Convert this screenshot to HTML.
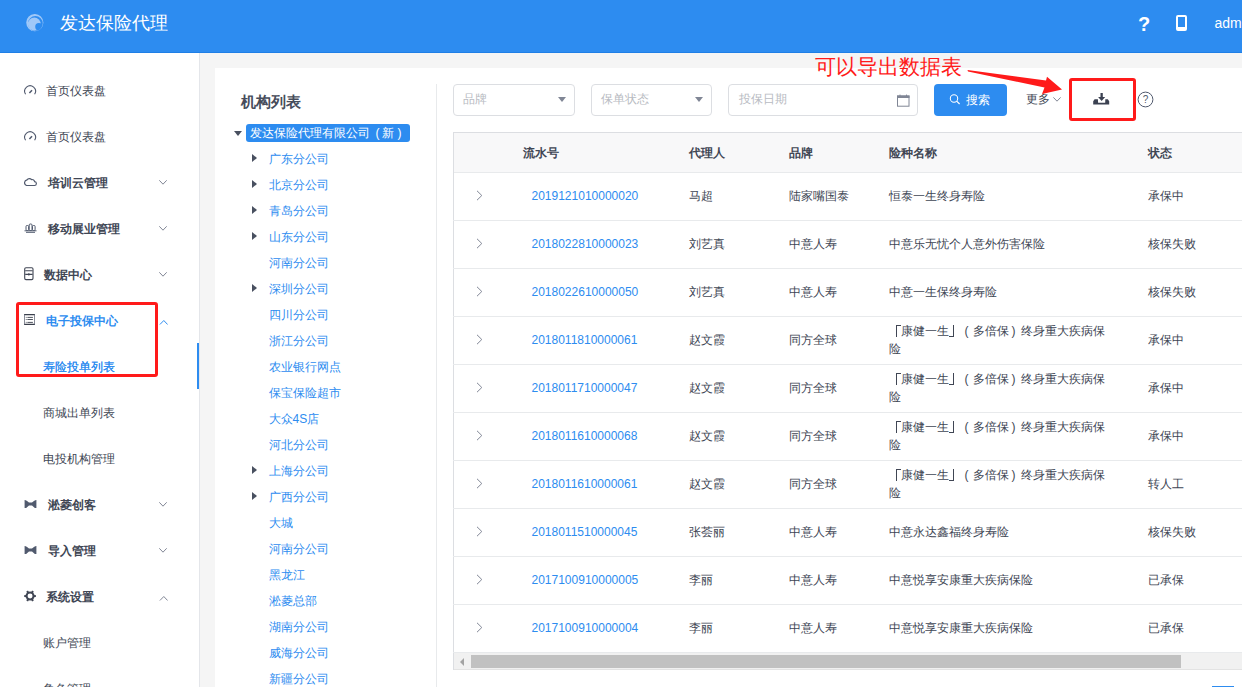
<!DOCTYPE html>
<html><head><meta charset="utf-8">
<style>
*{box-sizing:border-box;margin:0;padding:0}
html,body{width:1242px;height:687px;overflow:hidden;background:#f5f5f5;font-family:"Liberation Sans",sans-serif;color:#404654;font-size:12px}
.abs{position:absolute;white-space:nowrap}
#hdr{position:absolute;left:0;top:0;width:1242px;height:53px;background:#2d8cf0;border-bottom:1px solid #1f7fe6}
#side{position:absolute;left:0;top:53px;width:200px;height:634px;background:#fff;border-right:1px solid #e4e6ea}
.mi{position:absolute;left:0;width:199px;height:46px;line-height:46px;font-size:12px;color:#404654}
.mi .t{position:absolute;left:46px;top:1px}
.mi.b .t{font-weight:bold;left:48px}
.mi .ic{position:absolute;left:24px;top:17px}
.mi .chev{position:absolute;left:159px;top:20px}
.sub .t{left:43px}
#card{position:absolute;left:215px;top:68px;width:1100px;height:640px;background:#fff}
.tn{position:absolute;left:268.5px;height:26px;line-height:28px;color:#2d8cf0;font-size:12px}
.car{position:absolute;left:252px;width:0;height:0;border-top:4.5px solid transparent;border-bottom:4.5px solid transparent;border-left:5.5px solid #495060}
.th{position:absolute;top:133px;height:40px;line-height:40px;font-weight:bold;color:#404654}
.row{position:absolute;left:453px;width:800px;height:48px;border-bottom:1px solid #e8eaec}
.c{position:absolute;top:0;height:47px;line-height:47px;color:#404654}
.sel{position:absolute;top:84px;height:32px;border:1px solid #dcdee2;border-radius:4px;background:#fff}
.sel .ph{position:absolute;left:8.5px;top:0;line-height:29px;color:#b8bbc2;font-size:12px}
.dd{position:absolute;top:12px;width:0;height:0;border-left:4.5px solid transparent;border-right:4.5px solid transparent;border-top:5px solid #808695}
.sp{display:inline-block;width:12px}
</style></head><body>
<div id="hdr">
  <svg class="abs" style="left:26px;top:14px" width="18" height="18" viewBox="0 0 18 18"><circle cx="8.3" cy="10" r="6.4" fill="#9fc8f8"/><circle cx="12.9" cy="12.7" r="3.7" fill="#2d8cf0"/><path fill-rule="evenodd" fill="#9fc8f8" d="M0.2 8.6 A8.6 8.6 0 1 0 17.4 8.6 A8.6 8.6 0 1 0 0.2 8.6 Z M2 9.4 A7.4 7.4 0 1 0 16.8 9.4 A7.4 7.4 0 1 0 2 9.4 Z"/></svg>
  <div class="abs" style="left:60px;top:11px;font-size:18px;line-height:24px;color:#fff">发达保险代理</div>
  <div class="abs" style="left:1138px;top:12px;font-size:20px;line-height:24px;color:#fff;font-weight:bold">?</div>
  <svg class="abs" style="left:1176px;top:15px" width="12" height="16" viewBox="0 0 12 16"><rect x="1" y="1" width="9" height="14" rx="1" fill="none" stroke="#fff" stroke-width="2"/><rect x="1" y="12" width="9" height="3" fill="#fff"/></svg>
  <div class="abs" style="left:1214.5px;top:14px;font-size:14px;line-height:18px;color:#fff">admin</div>
</div>
<div id="side">
  <div class="mi" style="top:14px"><svg class="ic" style="top:18px" width="13" height="10" viewBox="0 0 13 10"><path d="M1.6 9.2 A5.4 5.4 0 1 1 10.6 9.2" fill="none" stroke="#515a6e" stroke-width="1.1"/><path d="M5.4 8 L8 5.2" stroke="#515a6e" stroke-width="1.5"/></svg><span class="t">首页仪表盘</span></div>
  <div class="mi" style="top:60px"><svg class="ic" style="top:18px" width="13" height="10" viewBox="0 0 13 10"><path d="M1.6 9.2 A5.4 5.4 0 1 1 10.6 9.2" fill="none" stroke="#515a6e" stroke-width="1.1"/><path d="M5.4 8 L8 5.2" stroke="#515a6e" stroke-width="1.5"/></svg><span class="t">首页仪表盘</span></div>
  <div class="mi b" style="top:106px"><svg class="ic" style="top:18px" width="13" height="10" viewBox="0 0 13 10"><path d="M2.5 8.5 H10.3 A1.9 1.9 0 0 0 10.6 4.7 A2.4 2.4 0 0 0 7.6 2.6 A2.8 2.8 0 0 0 3 2.9 A2.9 2.9 0 0 0 2.5 8.5 Z" fill="none" stroke="#515a6e" stroke-width="1.2"/></svg><span class="t">培训云管理</span><svg class="chev" style="top:21px" width="9" height="6" viewBox="0 0 9 6"><path d="M0.3 0.3 L4 4.2 L7.7 0.3" fill="none" stroke="#808695" stroke-width="1"/></svg></div>
  <div class="mi b" style="top:152px"><svg class="ic" style="top:18px" width="13" height="10" viewBox="0 0 13 10"><g fill="none" stroke="#515a6e" stroke-width="1"><rect x="2" y="2.5" width="2.6" height="5" rx="1"/><rect x="5.2" y="1" width="2.8" height="6.5" rx="1"/><rect x="8.5" y="2.5" width="2.6" height="5" rx="1"/></g><path d="M0.5 7.8 H12.5 M2 9.3 H11" stroke="#515a6e" stroke-width="1"/></svg><span class="t">移动展业管理</span><svg class="chev" style="top:21px" width="9" height="6" viewBox="0 0 9 6"><path d="M0.3 0.3 L4 4.2 L7.7 0.3" fill="none" stroke="#808695" stroke-width="1"/></svg></div>
  <div class="mi b" style="top:198px"><svg class="ic" style="top:16px" width="10" height="14" viewBox="0 0 10 14"><rect x="0.7" y="0.7" width="8.3" height="11.9" rx="1.3" fill="none" stroke="#404654" stroke-width="1.1"/><path d="M1.2 3.8 H8.6 M1.2 7.4 H8.6" stroke="#404654" stroke-width="1.1"/><path d="M4.85 6.2 V8.6" stroke="#404654" stroke-width="1.2"/></svg><span class="t" style="left:44px">数据中心</span><svg class="chev" style="top:21px" width="9" height="6" viewBox="0 0 9 6"><path d="M0.3 0.3 L4 4.2 L7.7 0.3" fill="none" stroke="#808695" stroke-width="1"/></svg></div>
  <div class="mi b" style="top:244px;color:#2d8cf0"><svg class="ic" style="top:17px" width="12" height="12" viewBox="0 0 12 12"><path d="M0 0.6 H11 M0 10.4 H11" stroke="#3a3f4c" stroke-width="1.1"/><path d="M0.5 0.6 V10.4 M10.5 0.6 V10.4" stroke="#7a7f8c" stroke-width="0.9"/><path d="M1.8 3.4 H2.6 M3.4 3.4 H8.9 M1.8 5.5 H2.6 M3.4 5.5 H8.9 M1.8 8.4 H2.6 M3.4 8.4 H8.9" stroke="#3a3f4c" stroke-width="0.9"/></svg><span class="t" style="left:46px">电子投保中心</span><svg class="chev" style="top:23px" width="9" height="6" viewBox="0 0 9 6"><path d="M0.9 4.5 L4.8 0.5 L8.6 4.5" fill="none" stroke="#2d8cf0" stroke-width="1"/></svg></div>
  <div class="mi sub" style="top:290px;color:#2d8cf0"><span class="t" style="left:43px;text-shadow:0.4px 0 0 #2d8cf0">寿险投单列表</span><div style="position:absolute;left:197px;top:0;width:2px;height:46px;background:#2d8cf0"></div></div>
  <div class="mi sub" style="top:336px"><span class="t">商城出单列表</span></div>
  <div class="mi sub" style="top:382px"><span class="t">电投机构管理</span></div>
  <div class="mi b" style="top:428px"><svg class="ic" style="top:18px" width="13" height="10" viewBox="0 0 13 10"><path d="M0.6 1 Q2 0.5 5 3.6 V6.4 Q2 9.5 0.6 9 Z M12.4 1 Q11 0.5 8 3.6 V6.4 Q11 9.5 12.4 9 Z M5 3.5 H8 V6.5 H5 Z" fill="#515a6e"/></svg><span class="t">淞菱创客</span><svg class="chev" style="top:21px" width="9" height="6" viewBox="0 0 9 6"><path d="M0.3 0.3 L4 4.2 L7.7 0.3" fill="none" stroke="#808695" stroke-width="1"/></svg></div>
  <div class="mi b" style="top:474px"><svg class="ic" style="top:18px" width="13" height="10" viewBox="0 0 13 10"><path d="M0.6 1 Q2 0.5 5 3.6 V6.4 Q2 9.5 0.6 9 Z M12.4 1 Q11 0.5 8 3.6 V6.4 Q11 9.5 12.4 9 Z M5 3.5 H8 V6.5 H5 Z" fill="#515a6e"/></svg><span class="t">导入管理</span><svg class="chev" style="top:21px" width="9" height="6" viewBox="0 0 9 6"><path d="M0.3 0.3 L4 4.2 L7.7 0.3" fill="none" stroke="#808695" stroke-width="1"/></svg></div>
  <div class="mi b" style="top:520px"><svg class="ic" style="top:17px" width="12" height="12" viewBox="-0.1 -0.1 11.1 11.1"><g fill="#404654"><rect x="4.6" y="0.1" width="1.8" height="3" transform="rotate(30 5.5 5.5)"/><rect x="4.6" y="0.1" width="1.8" height="3" transform="rotate(90 5.5 5.5)"/><rect x="4.6" y="0.1" width="1.8" height="3" transform="rotate(150 5.5 5.5)"/><rect x="4.6" y="0.1" width="1.8" height="3" transform="rotate(210 5.5 5.5)"/><rect x="4.6" y="0.1" width="1.8" height="3" transform="rotate(270 5.5 5.5)"/><rect x="4.6" y="0.1" width="1.8" height="3" transform="rotate(330 5.5 5.5)"/><circle cx="5.5" cy="5.5" r="4.2"/></g><circle cx="5.5" cy="5.5" r="2.3" fill="#fff"/></svg><span class="t" style="left:46px">系统设置</span><svg class="chev" style="top:23px" width="9" height="6" viewBox="0 0 9 6"><path d="M0.9 4.5 L4.8 0.5 L8.6 4.5" fill="none" stroke="#808695" stroke-width="1"/></svg></div>
  <div class="mi sub" style="top:566px"><span class="t">账户管理</span></div>
  <div class="mi sub" style="top:612px"><span class="t">角色管理</span></div>
</div>
<div id="card"></div>
<div class="abs" style="left:16px;top:302px;width:142px;height:75px;border:3px solid #ff1a1a;border-radius:3px"></div>
<div class="abs" style="left:241px;top:92px;font-size:15px;line-height:20px;font-weight:bold;color:#464c5b">机构列表</div>
<div class="abs" style="left:436px;top:84px;width:1px;height:610px;background:#e8eaec"></div>
<div class="abs" style="left:234px;top:131px;width:0;height:0;border-left:4.5px solid transparent;border-right:4.5px solid transparent;border-top:5px solid #495060"></div>
<div class="abs" style="left:246px;top:124px;width:164px;height:18px;background:#2d8cf0;border-radius:3px"></div>
<div class="abs" style="left:250px;top:124px;height:18px;line-height:18px;color:#fff;font-size:12px">发达保险代理有限公司</div><div class="abs" style="left:375.5px;top:124px;line-height:18px;color:#fff;font-size:12px">(</div><div class="abs" style="left:382px;top:124px;line-height:18px;color:#fff;font-size:12px">新</div><div class="abs" style="left:397.5px;top:124px;line-height:18px;color:#fff;font-size:12px">)</div>
<div class="tn" style="top:145px">广东分公司</div>
<div class="car" style="top:154px"></div>
<div class="tn" style="top:171px">北京分公司</div>
<div class="car" style="top:180px"></div>
<div class="tn" style="top:197px">青岛分公司</div>
<div class="car" style="top:206px"></div>
<div class="tn" style="top:223px">山东分公司</div>
<div class="car" style="top:232px"></div>
<div class="tn" style="top:249px">河南分公司</div>
<div class="tn" style="top:275px">深圳分公司</div>
<div class="car" style="top:284px"></div>
<div class="tn" style="top:301px">四川分公司</div>
<div class="tn" style="top:327px">浙江分公司</div>
<div class="tn" style="top:353px">农业银行网点</div>
<div class="tn" style="top:379px">保宝保险超市</div>
<div class="tn" style="top:405px">大众4S店</div>
<div class="tn" style="top:431px">河北分公司</div>
<div class="tn" style="top:457px">上海分公司</div>
<div class="car" style="top:466px"></div>
<div class="tn" style="top:483px">广西分公司</div>
<div class="car" style="top:492px"></div>
<div class="tn" style="top:509px">大城</div>
<div class="tn" style="top:535px">河南分公司</div>
<div class="tn" style="top:561px">黑龙江</div>
<div class="tn" style="top:587px">淞菱总部</div>
<div class="tn" style="top:613px">湖南分公司</div>
<div class="tn" style="top:639px">威海分公司</div>
<div class="tn" style="top:665px">新疆分公司</div>
<div class="sel" style="left:453px;width:122px"><span class="ph">品牌</span><i class="dd" style="left:104px"></i></div>
<div class="sel" style="left:591px;width:121px"><span class="ph">保单状态</span><i class="dd" style="left:103px"></i></div>
<div class="sel" style="left:728px;width:190px"><span class="ph" style="left:10px">投保日期</span>
<svg class="abs" style="left:167px;top:9px" width="14" height="13" viewBox="0 0 14 13"><rect x="1.5" y="2" width="11.5" height="10.2" fill="none" stroke="#808695" stroke-width="1"/><rect x="1" y="1.5" width="12.5" height="2.5" fill="#808695"/><path d="M4 0.6 V2 M10.5 0.6 V2" stroke="#808695" stroke-width="1"/></svg></div>
<div class="abs" style="left:934px;top:84px;width:73px;height:32px;background:#2d8cf0;border-radius:4px"></div>
<svg class="abs" style="left:949px;top:94px" width="12" height="12" viewBox="0 0 12 12"><circle cx="5" cy="4.5" r="3.7" fill="none" stroke="#fff" stroke-width="1.05"/><path d="M7.6 7.1 L10.6 10" stroke="#fff" stroke-width="1.2"/></svg>
<div class="abs" style="left:966px;top:84px;height:32px;line-height:32px;color:#fff;font-size:12px">搜索</div>
<div class="abs" style="left:1026px;top:83px;height:32px;line-height:32px;color:#404654;font-size:12px">更多</div>
<svg class="abs" style="left:1053px;top:97px" width="9" height="6" viewBox="0 0 9 6"><path d="M0.4 0.4 L4 4.2 L7.6 0.4" fill="none" stroke="#808695" stroke-width="1"/></svg>
<svg class="abs" style="left:1093px;top:92px" width="17" height="14" viewBox="0 0 17 14"><path d="M7.5 1 H9.8 V5 H12.2 L8.65 9 L5.1 5 H7.5 Z" fill="#3b4151"/><path d="M0.2 9.3 L1.6 7.2 H4.9 L5.1 10.8 H12.2 L12.3 7.2 H14.8 L16.2 9.3 V12.6 H0.2 Z" fill="#3b4151"/></svg>
<svg class="abs" style="left:1137px;top:91px" width="17" height="17" viewBox="0 0 17 17"><circle cx="8.5" cy="8.5" r="7.4" fill="none" stroke="#515a6e" stroke-width="1"/><text x="8.5" y="12.3" text-anchor="middle" font-family="Liberation Sans" font-size="10" fill="#515a6e">?</text></svg>
<div class="abs" style="left:1069px;top:78px;width:67px;height:43px;border:3px solid #ff1a1a;border-radius:3px"></div>
<div class="abs" style="left:815px;top:53px;font-size:21px;line-height:28px;color:#ff1a1a">可以导出数据表</div>
<svg class="abs" style="left:960px;top:60px" width="120" height="40" viewBox="960 60 120 40"><path d="M967.5 70 L1046 80.5 L1047 76.8 L1062 89.5 L1042 94 L1044.5 87.5 L968 71.5 Z" fill="#ff1a1a"/></svg>
<div class="abs" style="left:453px;top:132px;width:900px;height:538px;border:1px solid #dcdee2;border-right:none"></div>
<div class="abs" style="left:454px;top:133px;width:900px;height:40px;background:#f8f8f9;border-bottom:1px solid #e8eaec"></div>
<div class="th" style="left:523px">流水号</div>
<div class="th" style="left:689px">代理人</div>
<div class="th" style="left:789px">品牌</div>
<div class="th" style="left:889px">险种名称</div>
<div class="th" style="left:1148px">状态</div>
<div class="row" style="top:173px">
<svg class="abs" style="left:23px;top:17px" width="7" height="11" viewBox="0 0 7 11"><path d="M1 0.8 L5.8 5.5 L1 10.2" fill="none" stroke="#808695" stroke-width="1"/></svg>
<div class="c" style="left:78.5px;color:#2d8cf0">2019121010000020</div>
<div class="c" style="left:236px">马超</div>
<div class="c" style="left:336px">陆家嘴国泰</div>
<div class="c" style="left:436px">恒泰一生终身寿险</div>
<div class="c" style="left:695px">承保中</div>
</div>
<div class="row" style="top:221px">
<svg class="abs" style="left:23px;top:17px" width="7" height="11" viewBox="0 0 7 11"><path d="M1 0.8 L5.8 5.5 L1 10.2" fill="none" stroke="#808695" stroke-width="1"/></svg>
<div class="c" style="left:78.5px;color:#2d8cf0">2018022810000023</div>
<div class="c" style="left:236px">刘艺真</div>
<div class="c" style="left:336px">中意人寿</div>
<div class="c" style="left:436px">中意乐无忧个人意外伤害保险</div>
<div class="c" style="left:695px">核保失败</div>
</div>
<div class="row" style="top:269px">
<svg class="abs" style="left:23px;top:17px" width="7" height="11" viewBox="0 0 7 11"><path d="M1 0.8 L5.8 5.5 L1 10.2" fill="none" stroke="#808695" stroke-width="1"/></svg>
<div class="c" style="left:78.5px;color:#2d8cf0">2018022610000050</div>
<div class="c" style="left:236px">刘艺真</div>
<div class="c" style="left:336px">中意人寿</div>
<div class="c" style="left:436px">中意一生保终身寿险</div>
<div class="c" style="left:695px">核保失败</div>
</div>
<div class="row" style="top:317px">
<svg class="abs" style="left:23px;top:17px" width="7" height="11" viewBox="0 0 7 11"><path d="M1 0.8 L5.8 5.5 L1 10.2" fill="none" stroke="#808695" stroke-width="1"/></svg>
<div class="c" style="left:78.5px;color:#2d8cf0">2018011810000061</div>
<div class="c" style="left:236px">赵文霞</div>
<div class="c" style="left:336px">同方全球</div>
<div class="c" style="left:436px;top:5px;height:18px;line-height:18px"><span class="sp"></span>康健一生<span class="sp"></span><span class="sp"></span>多倍保<span class="sp"></span>终身重大疾病保</div><div class="c" style="left:436px;top:23px;height:18px;line-height:18px">险</div><div class="abs" style="left:442.5px;top:8px;width:5px;height:12px;border-left:1px solid #404654;border-top:1px solid #404654"></div><div class="abs" style="left:495.5px;top:8px;width:5px;height:12px;border-right:1px solid #404654;border-bottom:1px solid #404654"></div><div class="c" style="left:511.5px;top:5px;height:18px;line-height:18px">(</div><div class="c" style="left:558.5px;top:5px;height:18px;line-height:18px">)</div>
<div class="c" style="left:695px">承保中</div>
</div>
<div class="row" style="top:365px">
<svg class="abs" style="left:23px;top:17px" width="7" height="11" viewBox="0 0 7 11"><path d="M1 0.8 L5.8 5.5 L1 10.2" fill="none" stroke="#808695" stroke-width="1"/></svg>
<div class="c" style="left:78.5px;color:#2d8cf0">2018011710000047</div>
<div class="c" style="left:236px">赵文霞</div>
<div class="c" style="left:336px">同方全球</div>
<div class="c" style="left:436px;top:5px;height:18px;line-height:18px"><span class="sp"></span>康健一生<span class="sp"></span><span class="sp"></span>多倍保<span class="sp"></span>终身重大疾病保</div><div class="c" style="left:436px;top:23px;height:18px;line-height:18px">险</div><div class="abs" style="left:442.5px;top:8px;width:5px;height:12px;border-left:1px solid #404654;border-top:1px solid #404654"></div><div class="abs" style="left:495.5px;top:8px;width:5px;height:12px;border-right:1px solid #404654;border-bottom:1px solid #404654"></div><div class="c" style="left:511.5px;top:5px;height:18px;line-height:18px">(</div><div class="c" style="left:558.5px;top:5px;height:18px;line-height:18px">)</div>
<div class="c" style="left:695px">承保中</div>
</div>
<div class="row" style="top:413px">
<svg class="abs" style="left:23px;top:17px" width="7" height="11" viewBox="0 0 7 11"><path d="M1 0.8 L5.8 5.5 L1 10.2" fill="none" stroke="#808695" stroke-width="1"/></svg>
<div class="c" style="left:78.5px;color:#2d8cf0">2018011610000068</div>
<div class="c" style="left:236px">赵文霞</div>
<div class="c" style="left:336px">同方全球</div>
<div class="c" style="left:436px;top:5px;height:18px;line-height:18px"><span class="sp"></span>康健一生<span class="sp"></span><span class="sp"></span>多倍保<span class="sp"></span>终身重大疾病保</div><div class="c" style="left:436px;top:23px;height:18px;line-height:18px">险</div><div class="abs" style="left:442.5px;top:8px;width:5px;height:12px;border-left:1px solid #404654;border-top:1px solid #404654"></div><div class="abs" style="left:495.5px;top:8px;width:5px;height:12px;border-right:1px solid #404654;border-bottom:1px solid #404654"></div><div class="c" style="left:511.5px;top:5px;height:18px;line-height:18px">(</div><div class="c" style="left:558.5px;top:5px;height:18px;line-height:18px">)</div>
<div class="c" style="left:695px">承保中</div>
</div>
<div class="row" style="top:461px">
<svg class="abs" style="left:23px;top:17px" width="7" height="11" viewBox="0 0 7 11"><path d="M1 0.8 L5.8 5.5 L1 10.2" fill="none" stroke="#808695" stroke-width="1"/></svg>
<div class="c" style="left:78.5px;color:#2d8cf0">2018011610000061</div>
<div class="c" style="left:236px">赵文霞</div>
<div class="c" style="left:336px">同方全球</div>
<div class="c" style="left:436px;top:5px;height:18px;line-height:18px"><span class="sp"></span>康健一生<span class="sp"></span><span class="sp"></span>多倍保<span class="sp"></span>终身重大疾病保</div><div class="c" style="left:436px;top:23px;height:18px;line-height:18px">险</div><div class="abs" style="left:442.5px;top:8px;width:5px;height:12px;border-left:1px solid #404654;border-top:1px solid #404654"></div><div class="abs" style="left:495.5px;top:8px;width:5px;height:12px;border-right:1px solid #404654;border-bottom:1px solid #404654"></div><div class="c" style="left:511.5px;top:5px;height:18px;line-height:18px">(</div><div class="c" style="left:558.5px;top:5px;height:18px;line-height:18px">)</div>
<div class="c" style="left:695px">转人工</div>
</div>
<div class="row" style="top:509px">
<svg class="abs" style="left:23px;top:17px" width="7" height="11" viewBox="0 0 7 11"><path d="M1 0.8 L5.8 5.5 L1 10.2" fill="none" stroke="#808695" stroke-width="1"/></svg>
<div class="c" style="left:78.5px;color:#2d8cf0">2018011510000045</div>
<div class="c" style="left:236px">张荟丽</div>
<div class="c" style="left:336px">中意人寿</div>
<div class="c" style="left:436px">中意永达鑫福终身寿险</div>
<div class="c" style="left:695px">核保失败</div>
</div>
<div class="row" style="top:557px">
<svg class="abs" style="left:23px;top:17px" width="7" height="11" viewBox="0 0 7 11"><path d="M1 0.8 L5.8 5.5 L1 10.2" fill="none" stroke="#808695" stroke-width="1"/></svg>
<div class="c" style="left:78.5px;color:#2d8cf0">2017100910000005</div>
<div class="c" style="left:236px">李丽</div>
<div class="c" style="left:336px">中意人寿</div>
<div class="c" style="left:436px">中意悦享安康重大疾病保险</div>
<div class="c" style="left:695px">已承保</div>
</div>
<div class="row" style="top:605px">
<svg class="abs" style="left:23px;top:17px" width="7" height="11" viewBox="0 0 7 11"><path d="M1 0.8 L5.8 5.5 L1 10.2" fill="none" stroke="#808695" stroke-width="1"/></svg>
<div class="c" style="left:78.5px;color:#2d8cf0">2017100910000004</div>
<div class="c" style="left:236px">李丽</div>
<div class="c" style="left:336px">中意人寿</div>
<div class="c" style="left:436px">中意悦享安康重大疾病保险</div>
<div class="c" style="left:695px">已承保</div>
</div>
<div class="abs" style="left:454px;top:652px;width:800px;height:18px;background:#f1f1f1;border-top:1px solid #e8eaec;border-bottom:1px solid #e3e3e3"></div>
<div class="abs" style="left:471px;top:655px;width:710px;height:13px;background:#c1c1c1"></div>
<div class="abs" style="left:460px;top:657.5px;width:0;height:0;border-top:4px solid transparent;border-bottom:4px solid transparent;border-right:4.5px solid #a3a3a3"></div>
<div class="abs" style="left:1212px;top:686px;width:22px;height:2px;background:#2d8cf0"></div>
</body></html>
